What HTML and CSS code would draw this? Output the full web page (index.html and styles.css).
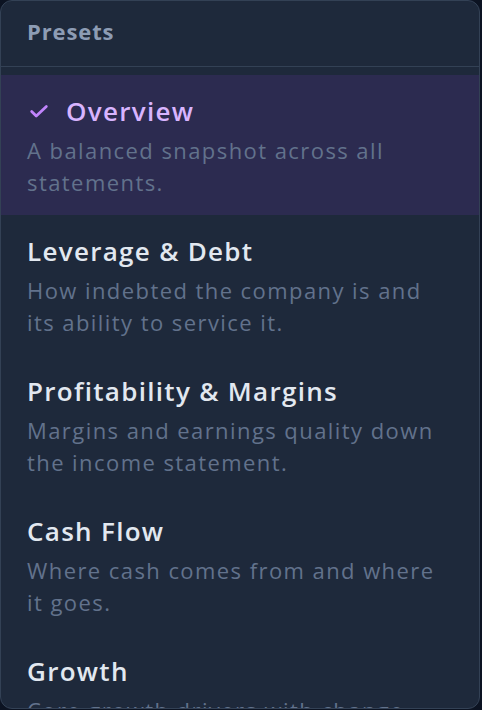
FILE: index.html
```html
<!DOCTYPE html>
<html lang="en">
<head>
<meta charset="utf-8">
<link rel="stylesheet" href="styles.css">
</head>
<body>
<div class="stage">
  <div class="panel">
    <div class="panel-header">Presets</div>
    <ul class="list">
      <li class="item active">
        <div class="title">
          <svg class="check" viewBox="0 0 24 24" width="22" height="22"><path d="M4 12.5l5 5L20 7" fill="none" stroke="currentColor" stroke-width="3" stroke-linecap="round" stroke-linejoin="round"/></svg>
          <span>Overview</span>
        </div>
        <div class="desc">A balanced snapshot across all statements.</div>
      </li>
      <li class="item">
        <div class="title"><span>Leverage &amp; Debt</span></div>
        <div class="desc">How indebted the company is and its ability to service it.</div>
      </li>
      <li class="item">
        <div class="title"><span>Profitability &amp; Margins</span></div>
        <div class="desc">Margins and earnings quality down the income statement.</div>
      </li>
      <li class="item">
        <div class="title"><span>Cash Flow</span></div>
        <div class="desc">Where cash comes from and where it goes.</div>
      </li>
      <li class="item">
        <div class="title"><span>Growth</span></div>
        <div class="desc">Core growth drivers with change over time.</div>
      </li>
    </ul>
  </div>
</div>
</body>
</html>
```
FILE: styles.css
```css
* { box-sizing: border-box; }
html, body { margin: 0; padding: 0; }
body {
  width: 482px;
  height: 710px;
  overflow: hidden;
  background: #0c1322;
  font-family: "Open Sans", "Noto Sans", sans-serif;
}
.stage {
  width: 482px;
  height: 710px;
}
.panel {
  width: 480px;
  height: 709px;
  background: #1e293b;
  border: 1px solid #334155;
  border-radius: 12px;
  overflow: hidden;
}
.panel-header {
  height: 66px;
  padding: 0 26px 5px;
  display: flex;
  align-items: center;
  border-bottom: 1px solid #334155;
  color: #8d9cb4;
  font-weight: 700;
  font-size: 22px;
  letter-spacing: 0.04em;
}
.list {
  list-style: none;
  margin: 0;
  padding: 8px 0 0;
}
.item {
  padding: 18px 26px 17px;
}
.item.active {
  background: #2c2b50;
}
.title {
  display: flex;
  align-items: center;
  gap: 16px;
  height: 36px;
  color: #e2e8f0;
  font-size: 26px;
  font-weight: 600;
  letter-spacing: 0.05em;
}
.active .title { color: #d8b4fe; }
.check { color: #c084fc; flex: none; margin-left: 1px; }
.desc {
  margin-top: 5px;
  color: #62728c;
  font-size: 22px;
  line-height: 32px;
  letter-spacing: 0.065em;
}
```
